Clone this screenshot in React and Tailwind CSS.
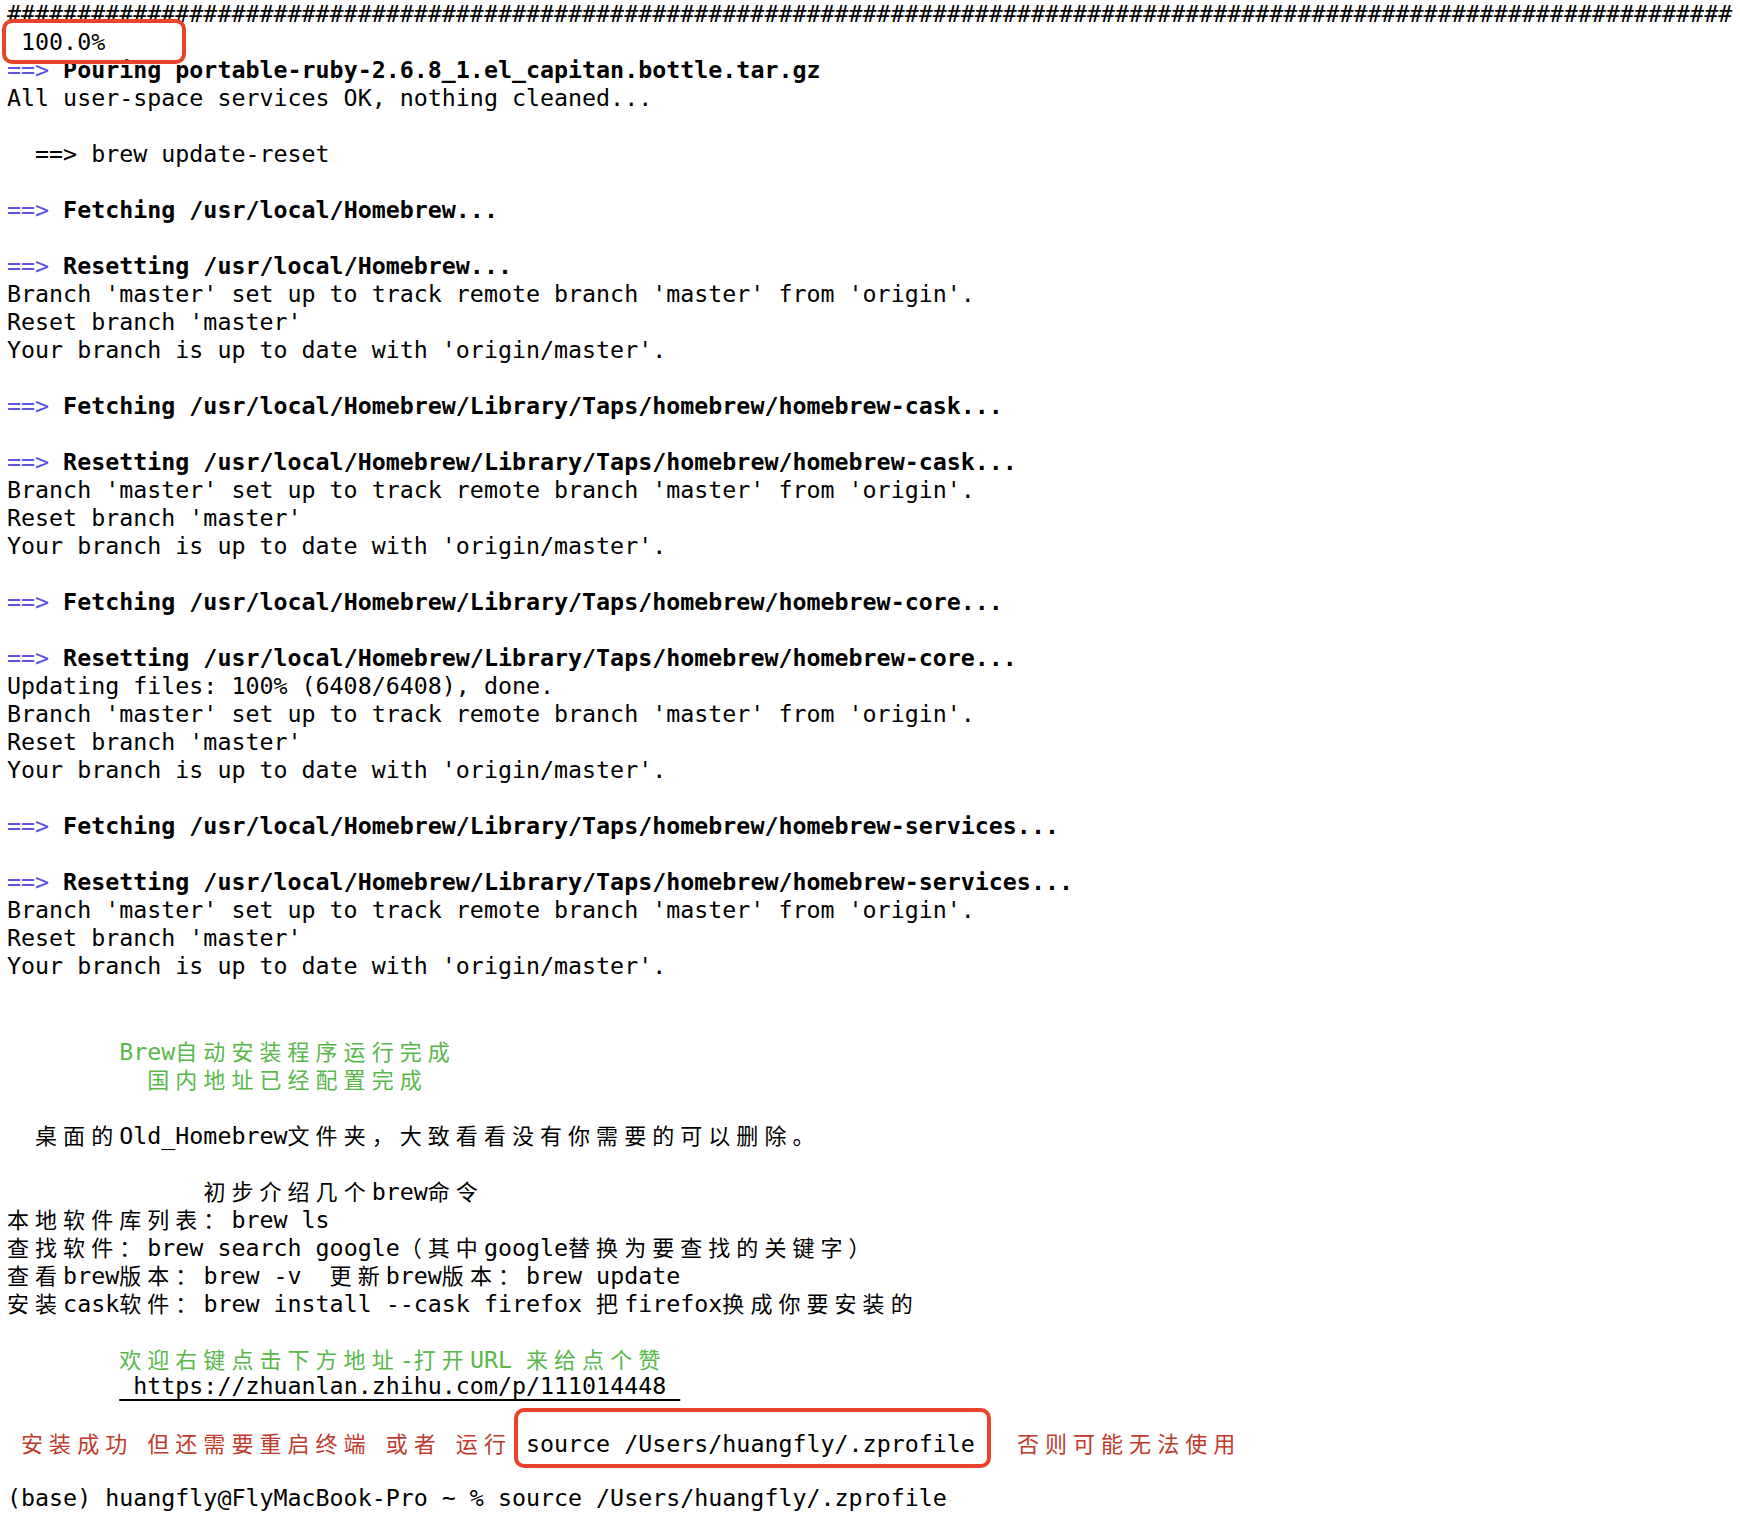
const CJK_RE = /([\u2E80-\u9FFF\u3000-\u303F\uFF00-\uFFEF]+)/;

// terminal cells: ascii = 1 cell (~14px), CJK = 2 cells
function Txt({ s }) {
  return s.split(CJK_RE).map((part, i) =>
    i % 2 ? (
      <span
        key={i}
        className="font-['Noto_Sans_CJK_SC',sans-serif] text-[22px] tracking-[6.05px]"
      >
        {part}
      </span>
    ) : (
      part
    )
  );
}

function Line({ children }) {
  return <div className="h-[28px] leading-[28px] whitespace-pre">{children}</div>;
}

function Arrow({ text }) {
  return (
    <Line>
      <span className="text-[#5b52e8]">==&gt;</span>
      <span className="font-bold"> {text}</span>
    </Line>
  );
}

const BRANCH = "Branch 'master' set up to track remote branch 'master' from 'origin'.";
const RESET = "Reset branch 'master'";
const YOUR = "Your branch is up to date with 'origin/master'.";
const TAPS = "/usr/local/Homebrew/Library/Taps/homebrew/";

function Reset3() {
  return (
    <>
      <Line>{BRANCH}</Line>
      <Line>{RESET}</Line>
      <Line>{YOUR}</Line>
    </>
  );
}

export default function App() {
  return (
    <div className="relative w-[1740px] h-[1516px] bg-white overflow-hidden text-black font-['DejaVu_Sans_Mono',monospace] text-[23.3px] pl-[7px]">
      <Line>{"#".repeat(123)}</Line>
      <Line> 100.0%</Line>
      <Arrow text="Pouring portable-ruby-2.6.8_1.el_capitan.bottle.tar.gz" />
      <Line>All user-space services OK, nothing cleaned...</Line>
      <Line />
      <Line>{"  ==> brew update-reset"}</Line>
      <Line />
      <Arrow text="Fetching /usr/local/Homebrew..." />
      <Line />
      <Arrow text="Resetting /usr/local/Homebrew..." />
      <Reset3 />
      <Line />
      <Arrow text={`Fetching ${TAPS}homebrew-cask...`} />
      <Line />
      <Arrow text={`Resetting ${TAPS}homebrew-cask...`} />
      <Reset3 />
      <Line />
      <Arrow text={`Fetching ${TAPS}homebrew-core...`} />
      <Line />
      <Arrow text={`Resetting ${TAPS}homebrew-core...`} />
      <Line>Updating files: 100% (6408/6408), done.</Line>
      <Reset3 />
      <Line />
      <Arrow text={`Fetching ${TAPS}homebrew-services...`} />
      <Line />
      <Arrow text={`Resetting ${TAPS}homebrew-services...`} />
      <Reset3 />
      <Line />
      <Line />
      <Line>
        <span className="text-[#58b84a]">
          <Txt s="        Brew自动安装程序运行完成" />
        </span>
      </Line>
      <Line>
        <span className="text-[#58b84a]">
          <Txt s="          国内地址已经配置完成" />
        </span>
      </Line>
      <Line />
      <Line>
        <Txt s="  桌面的Old_Homebrew文件夹，大致看看没有你需要的可以删除。" />
      </Line>
      <Line />
      <Line>
        <Txt s="              初步介绍几个brew命令" />
      </Line>
      <Line>
        <Txt s="本地软件库列表：brew ls" />
      </Line>
      <Line>
        <Txt s="查找软件：brew search google（其中google替换为要查找的关键字）" />
      </Line>
      <Line>
        <Txt s="查看brew版本：brew -v  更新brew版本：brew update" />
      </Line>
      <Line>
        <Txt s="安装cask软件：brew install --cask firefox 把firefox换成你要安装的" />
      </Line>
      <Line />
      <Line>
        <span className="text-[#58b84a]">
          <Txt s="        欢迎右键点击下方地址-打开URL 来给点个赞" />
        </span>
      </Line>
      <Line>
        {"        "}
        <span className="underline decoration-2 underline-offset-[5px]">
          {" https://zhuanlan.zhihu.com/p/111014448 "}
        </span>
      </Line>
      <Line />
      <Line>
        <span className="text-[#be3a2c]">
          <Txt s=" 安装成功 但还需要重启终端 或者 运行 " />
        </span>
        {"source /Users/huangfly/.zprofile   "}
        <span className="text-[#be3a2c]">
          <Txt s="否则可能无法使用" />
        </span>
      </Line>
      <Line />
      <Line>(base) huangfly@FlyMacBook-Pro ~ % source /Users/huangfly/.zprofile</Line>

      {/* red annotation boxes */}
      <div className="absolute left-[2px] top-[19px] w-[184px] h-[45px] border-4 border-[#e8442b] rounded-[10px]" />
      <div className="absolute left-[514px] top-[1408px] w-[477px] h-[60px] border-4 border-[#e8442b] rounded-[10px]" />
    </div>
  );
}
